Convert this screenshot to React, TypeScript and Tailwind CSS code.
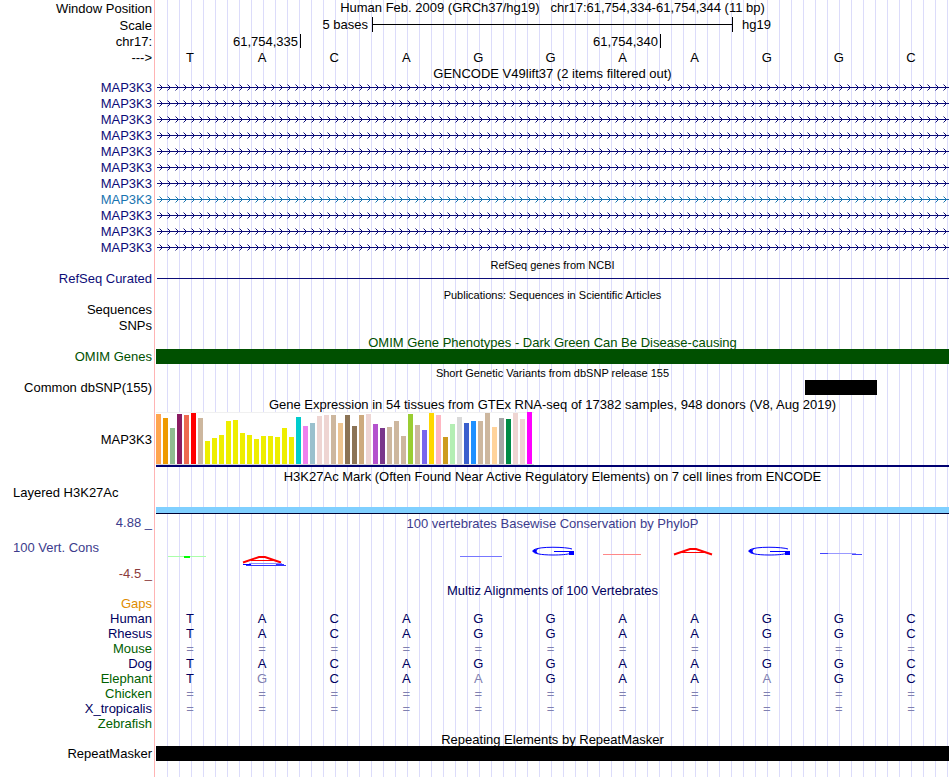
import type { ReactNode } from 'react';

const BASES = 'TACAGGAAGGC';

const GENES = [
    'text-[#0c0c78]', 'text-[#0c0c78]', 'text-[#0c0c78]', 'text-[#0c0c78]',
    'text-[#0c0c78]', 'text-[#0c0c78]', 'text-[#0c0c78]', 'text-[#1874b0]',
    'text-[#0c0c78]', 'text-[#0c0c78]', 'text-[#0c0c78]',
];

const SPECIES = [
    { name: 'Human', seq: 'TACAGGAAGGC', color: 'text-[#000060]' },
    { name: 'Rhesus', seq: 'TACAGGAAGGC', color: 'text-[#000060]' },
    { name: 'Mouse', seq: '===========', color: 'text-[#006000]' },
    { name: 'Dog', seq: 'TACAGGAAGGC', color: 'text-[#000060]' },
    { name: 'Elephant', seq: 'TGCAAGAAAGC', color: 'text-[#006000]' },
    { name: 'Chicken', seq: '===========', color: 'text-[#006000]' },
    { name: 'X_tropicalis', seq: '===========', color: 'text-[#000060]' },
    { name: 'Zebrafish', seq: '', color: 'text-[#006000]' },
];

// [color, height] per GTEx tissue
const TISSUES: [string, number][] = [
    ['#ffa54f', 50], ['#ee9a00', 46], ['#8fbc8f', 36], ['#8b1c62', 50], ['#ee6a50', 49], ['#ff0000', 51],
    ['#cdb79e', 46], ['#eeee00', 23], ['#eeee00', 26], ['#eeee00', 29], ['#eeee00', 43], ['#eeee00', 44],
    ['#eeee00', 31], ['#eeee00', 29], ['#eeee00', 25], ['#eeee00', 28], ['#eeee00', 28], ['#eeee00', 27],
    ['#eeee00', 36], ['#eeee00', 27], ['#00cdcd', 47], ['#ee82ee', 38], ['#9ac0cd', 41], ['#eed5d2', 48],
    ['#eed5d2', 49], ['#cdb79e', 49], ['#eec591', 41], ['#8b7355', 49], ['#8b7355', 38], ['#cdaa7d', 49],
    ['#eed5d2', 50], ['#b452cd', 40], ['#7a378b', 36], ['#cdb79e', 37], ['#cdb79e', 43], ['#cdb79e', 28],
    ['#9acd32', 50], ['#cdb79e', 39], ['#7a67ee', 34], ['#ffd700', 51], ['#ffb6c1', 49], ['#cd9b1d', 27],
    ['#b4eeb4', 40], ['#d9d9d9', 47], ['#3a5fcd', 41], ['#1e90ff', 43], ['#cdb79e', 43], ['#cdb79e', 51],
    ['#ffd39b', 37], ['#a6a6a6', 46], ['#008b45', 45], ['#eed5d2', 51], ['#eed5d2', 45], ['#ff00ff', 52],
];

interface TrackProps {
    label?: string;
    labelClass?: string;
    height?: string;
    children?: ReactNode;
}

function Track({ label, labelClass = '', height = 'h-4', children }: TrackProps) {
    return (
        <div className={`flex ${height}`}>
            <div className={`flex w-[156px] shrink-0 items-center justify-end pr-1 whitespace-nowrap ${labelClass}`}>
                {label}
            </div>
            <div className="min-w-0 flex-1">{children}</div>
        </div>
    );
}

function Title({ children, height = 'h-4', className = '' }: { children: ReactNode; height?: string; className?: string }) {
    return (
        <Track height={height}>
            <h2 className={`flex h-full items-center justify-center pt-0.5 whitespace-pre ${className}`}>{children}</h2>
        </Track>
    );
}

function Bases({ seq, reference }: { seq: string; reference?: string }) {
    return (
        <div className="grid h-full grid-cols-11 items-center text-center">
            {seq.split('').map((base, i) => (
                <span key={i} className={`pr-1 ${base === '=' || (reference && base !== reference[i]) ? 'text-[#8080b0]' : ''}`}>
                    {base}
                </span>
            ))}
        </div>
    );
}

function GeneArrows({ id }: { id: string }) {
    return (
        <svg className="block h-4 w-full" shapeRendering="crispEdges">
            <defs>
                <pattern id={id} x="1" y="4" width="8" height="7" patternUnits="userSpaceOnUse">
                    <path d="M2 0h1v1h-1zM2 6h1v1h-1z" fill="currentColor" opacity="0.5" />
                    <path d="M3 1h1v1h-1zM4 2h1v1h-1zM4 4h1v1h-1zM3 5h1v1h-1z" fill="currentColor" />
                </pattern>
            </defs>
            <rect x="1" y="4" width="100%" height="7" fill={`url(#${id})`} />
            <rect x="1" y="7" width="100%" height="1" fill="currentColor" />
        </svg>
    );
}

// Flattened blue mark, 43 wide and 8 high
function BlueMark({ x }: { x: number }) {
    return (
        <g transform={`translate(${x} 15)`}>
            <path d="M41 2C36 0 8 -1 2.500 3C0 6 8 8 22 8C30 8 36 7.500 39 6.500" stroke="#0000ff" />
            <path d="M8 1.500Q-5 4 8 7Q3 4 8 1.500z" fill="#0000ff" />
            <rect x="23" y="4" width="20" height="1" fill="#0000ff" />
            <rect x="38" y="4" width="5" height="4" fill="#0000ff" />
        </g>
    );
}

// Flattened red mark, 40 wide and 7 high
function RedMark({ x, y }: { x: number; y: number }) {
    return (
        <g transform={`translate(${x} ${y})`} stroke="#ff0000">
            <path d="M1 6.500 17 1h6l16 5.500" strokeWidth="2" />
            <path d="M9 4.500h22" />
        </g>
    );
}

function ConservationLogo() {
    return (
        <svg className="block h-[50px] w-full" viewBox="0 0 793 50" preserveAspectRatio="none" fill="none">
            <rect x="12" y="24" width="38" height="1" fill="#aaffaa" />
            <rect x="28" y="24" width="6" height="2" fill="#00ff00" />

            <RedMark x={86} y={24} />
            <path d="M93 31.500h33" stroke="#8888ff" />
            <path d="M87 32.500h8" stroke="#0000ff" />
            <path d="M90 33.500h40M120 32.500h8" stroke="#3333ff" />

            <rect x="304" y="24" width="42" height="1" fill="#7777ff" />
            <BlueMark x={375} />
            <rect x="447" y="22" width="38" height="1" fill="#ff8888" />
            <RedMark x={517} y={16} />
            <BlueMark x={591} />

            <path d="M668 21.500h32" stroke="#9999ff" />
            <path d="M664 21.500h8M696 22.500h10" stroke="#4444ff" />
        </svg>
    );
}

export default function App() {
    return (
        <main className="min-h-screen bg-white pr-px font-['Liberation_Sans',sans-serif] text-[13px] leading-4 text-black">
            <div className="relative pb-4">
                {/* Guide lines behind the tracks */}
                <div className="absolute inset-y-0 right-0 left-[154px] border-l border-[#ffb4b4] pl-px">
                    <div className="h-full bg-[repeating-linear-gradient(to_right,transparent_0px,transparent_11px,#dcdcfa_11px,#dcdcfa_12px)]" />
                </div>

                <div className="relative">
                    <Track label="Window Position" height="h-[17px]">
                        <h1 className="text-center whitespace-pre">Human Feb. 2009 (GRCh37/hg19)   chr17:61,754,334-61,754,344 (11 bp)</h1>
                    </Track>
                    <Track label="Scale" height="h-[17px]">
                        <div className="flex">
                            <span className="w-[216px] pr-1 text-right">5 bases</span>
                            <div className="flex h-[15px] w-[361px] items-center border-x border-black">
                                <div className="h-px w-full bg-black" />
                            </div>
                            <span className="pl-[9px]">hg19</span>
                        </div>
                    </Track>
                    <Track label="chr17:">
                        <div className="flex h-[14px]">
                            <span className="w-[145px] border-r border-black pr-0.5 text-right">61,754,335</span>
                            <span className="w-[360px] border-r border-black pr-0.5 text-right">61,754,340</span>
                        </div>
                    </Track>
                    <Track label="--->">
                        <div className="h-[14px]"><Bases seq={BASES} /></div>
                    </Track>

                    <Title height="h-[14px]">GENCODE V49lift37 (2 items filtered out)</Title>
                    {GENES.map((color, i) => (
                        <Track key={i} label="MAP3K3" labelClass={color}>
                            <div className={color}><GeneArrows id={`arrows-${i}`} /></div>
                        </Track>
                    ))}

                    <Title height="h-[15px]" className="text-[11px]">RefSeq genes from NCBI</Title>
                    <Track label="RefSeq Curated" labelClass="text-[#0c0c78]" height="h-[15px]">
                        <div className="flex h-full items-center pl-px">
                            <div className="h-px w-full bg-[#0c0c78]" />
                        </div>
                    </Track>

                    <Title className="text-[11px]">Publications: Sequences in Scientific Articles</Title>
                    <Track label="Sequences" />
                    <Track label="SNPs" />

                    <Title height="h-[15px]" className="text-[#005000]">OMIM Gene Phenotypes - Dark Green Can Be Disease-causing</Title>
                    <Track label="OMIM Genes" labelClass="text-[#005000]" height="h-[15px]">
                        <div className="h-full bg-[#005000]" />
                    </Track>

                    <Title className="text-[11px]">Short Genetic Variants from dbSNP release 155</Title>
                    <Track label="Common dbSNP(155)" height="h-[15px]">
                        <div className="grid h-full grid-cols-11">
                            <div className="col-start-10 bg-black" />
                        </div>
                    </Track>

                    <Title height="h-[17px]">Gene Expression in 54 tissues from GTEx RNA-seq of 17382 samples, 948 donors (V8, Aug 2019)</Title>
                    <Track label="MAP3K3" height="h-[55px]">
                        <div className="flex h-full flex-col border-b-2 border-[#000070]">
                            <div className="flex min-h-0 w-[378px] flex-1 items-end gap-0.5 border-y border-t-[#f0f0f0] border-b-[#d8d8d8] bg-white">
                                {TISSUES.map(([color, height], i) => (
                                    <div key={i} className="w-[5px]" style={{ height, backgroundColor: color }} />
                                ))}
                            </div>
                        </div>
                    </Track>

                    <Title height="h-[18px]">H3K27Ac Mark (Often Found Near Active Regulatory Elements) on 7 cell lines from ENCODE</Title>
                    <div className="h-[15px] pl-[13px]">Layered H3K27Ac</div>
                    <Track height="h-[14px]">
                        <div className="flex h-full items-end">
                            <div className="h-[7px] w-full border-b border-[#000030] bg-[#80d0ff]" />
                        </div>
                    </Track>

                    <Track label="4.88 _" labelClass="text-[#3c3c8c]" height="h-[18px]">
                        <h2 className="pt-0.5 text-center text-[#3c3c8c]">100 vertebrates Basewise Conservation by PhyloP</h2>
                    </Track>
                    <div className="flex h-[50px]">
                        <div className="flex w-[156px] shrink-0 flex-col justify-between pt-2 pr-1 pl-[13px]">
                            <span className="text-[#3c3c8c]">100 Vert. Cons</span>
                            <span className="text-right text-[#8c3c3c]">-4.5 _</span>
                        </div>
                        <div className="min-w-0 flex-1"><ConservationLogo /></div>
                    </div>

                    <Title height="h-[15px]" className="text-[#000060]">Multiz Alignments of 100 Vertebrates</Title>
                    <Track label="Gaps" labelClass="text-[#e08c00]" height="h-[14px]" />
                    {SPECIES.map(({ name, seq, color }) => (
                        <Track key={name} label={name} labelClass={color} height="h-[15px]">
                            <div className="h-full text-[#000060]"><Bases seq={seq} reference={BASES} /></div>
                        </Track>
                    ))}

                    <Title height="h-[15px]">Repeating Elements by RepeatMasker</Title>
                    <Track label="RepeatMasker" height="h-[15px]">
                        <div className="h-full bg-black" />
                    </Track>
                </div>
            </div>
        </main>
    );
}
